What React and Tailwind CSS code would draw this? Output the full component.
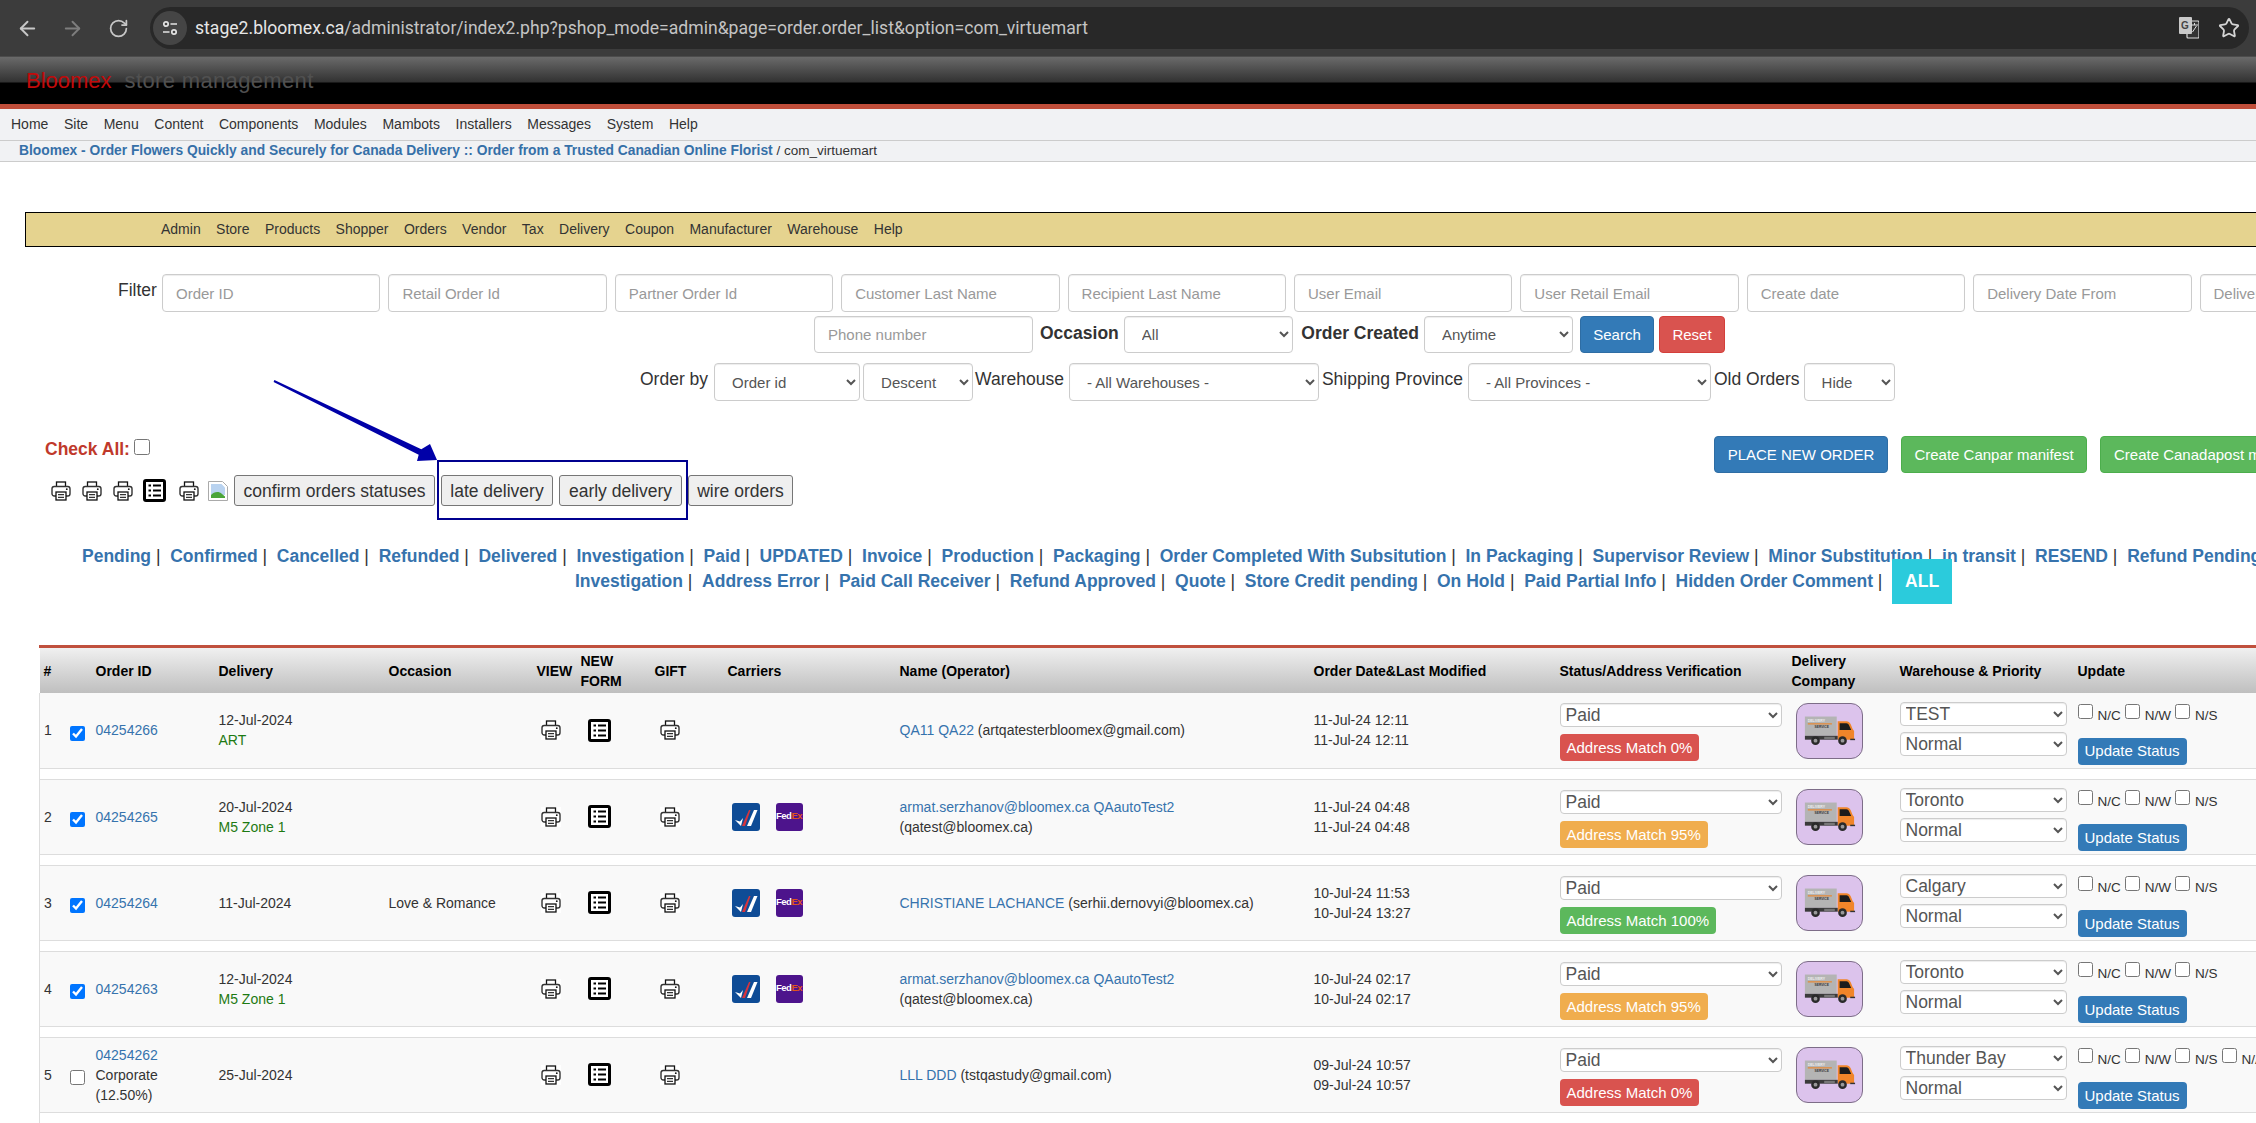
import React from 'react';
import { ArrowLeft, ArrowRight, RotateCw, Star } from 'lucide-react';

const topMenu = ['Home', 'Site', 'Menu', 'Content', 'Components', 'Modules', 'Mambots', 'Installers', 'Messages', 'System', 'Help'];
const shopMenu = ['Admin', 'Store', 'Products', 'Shopper', 'Orders', 'Vendor', 'Tax', 'Delivery', 'Coupon', 'Manufacturer', 'Warehouse', 'Help'];
const filters = ['Order ID', 'Retail Order Id', 'Partner Order Id', 'Customer Last Name', 'Recipient Last Name', 'User Email', 'User Retail Email', 'Create date', 'Delivery Date From', 'Delivery Date To'];
const statusRow1 = ['Pending', 'Confirmed', 'Cancelled', 'Refunded', 'Delivered', 'Investigation', 'Paid', 'UPDATED', 'Invoice', 'Production', 'Packaging', 'Order Completed With Subsitution', 'In Packaging', 'Supervisor Review', 'Minor Substitution', 'in transit', 'RESEND', 'Refund Pending'];
const statusRow2 = ['Investigation', 'Address Error', 'Paid Call Receiver', 'Refund Approved', 'Quote', 'Store Credit pending', 'On Hold', 'Paid Partial Info', 'Hidden Order Comment'];

const orders = [
  { n: 1, id: '04254266', checked: true, delivery: '12-Jul-2024', zone: 'ART', name: 'QA11 QA22', email: '(artqatesterbloomex@gmail.com)', dates: ['11-Jul-24 12:11', '11-Jul-24 12:11'], match: 0, wh: 'TEST' },
  { n: 2, id: '04254265', checked: true, delivery: '20-Jul-2024', zone: 'M5 Zone 1', carriers: true, name: 'armat.serzhanov@bloomex.ca QAautoTest2', email: '(qatest@bloomex.ca)', wrap: true, dates: ['11-Jul-24 04:48', '11-Jul-24 04:48'], match: 95, wh: 'Toronto' },
  { n: 3, id: '04254264', checked: true, delivery: '11-Jul-2024', occasion: 'Love & Romance', carriers: true, name: 'CHRISTIANE LACHANCE', email: '(serhii.dernovyi@bloomex.ca)', dates: ['10-Jul-24 11:53', '10-Jul-24 13:27'], match: 100, wh: 'Calgary' },
  { n: 4, id: '04254263', checked: true, delivery: '12-Jul-2024', zone: 'M5 Zone 1', carriers: true, name: 'armat.serzhanov@bloomex.ca QAautoTest2', email: '(qatest@bloomex.ca)', wrap: true, dates: ['10-Jul-24 02:17', '10-Jul-24 02:17'], match: 95, wh: 'Toronto' },
  { n: 5, id: '04254262', corporate: true, checked: false, delivery: '25-Jul-2024', name: 'LLL DDD', email: '(tstqastudy@gmail.com)', dates: ['09-Jul-24 10:57', '09-Jul-24 10:57'], match: 0, wh: 'Thunder Bay', extraFlag: true },
];

const PrinterIcon = ({ className = '' }) => (
  <svg viewBox="0 0 20 20" className={`w-[20px] h-[20px] shrink-0 ${className}`}>
    <rect width="20" height="20" fill="#fff" />
    <rect x="5.5" y="1" width="9" height="5" fill="#fff" stroke="#111" strokeWidth="1.3" />
    <rect x="1" y="5.5" width="18" height="9.5" rx="2.2" fill="#fff" stroke="#333" strokeWidth="1.4" />
    <rect x="5" y="11" width="10" height="8" fill="#fff" stroke="#111" strokeWidth="1.3" />
    <path d="M7 13.7h6M7 16.3h6" stroke="#333" strokeWidth="1.2" />
    <circle cx="15.8" cy="8.2" r="0.9" fill="#111" />
  </svg>
);

const ListIcon = ({ className = '' }) => (
  <svg viewBox="0 0 23 23" className={`w-[23px] h-[23px] shrink-0 ${className}`}>
    <rect x="1.5" y="1.5" width="20" height="20" rx="1.5" fill="#fff" stroke="#000" strokeWidth="3" />
    <path d="M5.5 6.5h2.5M5.5 11.5h2.5M5.5 16.5h2.5M10 6.5h8M10 11.5h8M10 16.5h8" stroke="#000" strokeWidth="2.2" />
  </svg>
);

const BrokenImage = () => (
  <svg viewBox="0 0 20 20" className="w-[20px] h-[20px] shrink-0 ml-[9px]">
    <path d="M0.5 0.5h14l5 5v14h-19z" fill="#fff" stroke="#aaa" />
    <path d="M3 3h10.5l3.5 3.5V14H3z" fill="#b9d3f0" />
    <path d="M3 17v-3c3-3.5 8-4 11-1l3 2.5V17z" fill="#4ba53a" />
  </svg>
);

const CanparIcon = () => (
  <svg viewBox="0 0 28 28" className="w-[28px] h-[28px] rounded-[3px] shrink-0">
    <rect width="28" height="28" fill="#0f4c96" />
    <path d="M3 17l5 1.500 3-3.500-2 8z" fill="#fff" />
    <path d="M10 23L17 7h1.500L13 23z" fill="#d8343c" />
    <path d="M15 23L22 7h3.500L19 23z" fill="#fff" />
  </svg>
);

const FedexIcon = () => (
  <div className="w-[27px] h-[28px] rounded-[3px] bg-[#4d148c] flex items-center justify-center shrink-0 font-bold text-[9.500px] tracking-[-0.5px] pb-[1px]">
    <span className="text-white">Fed</span>
    <span className="text-[#e2531b]">Ex</span>
  </div>
);

const TruckIcon = () => (
  <div className="w-[67px] h-[56px] rounded-[12px] bg-[#dcc3ec] border border-[#7d6d88] shrink-0 mt-[1px]">
    <svg viewBox="0 0 67 56" className="w-full h-full">
      <rect x="8" y="13" width="33" height="20" fill="#b4b4b4" />
      <text x="11" y="19" fontSize="3.6" fontWeight="700" fill="#eee">DELIVERY</text>
      <rect x="11" y="20" width="25" height="1.2" fill="#e8862e" />
      <text x="18" y="25" fontSize="3.4" fontWeight="700" fill="#333">SERVICE</text>
      <path d="M42 33V18h9c2 0 3.5 1 4.5 3l2 5 1.500 2v9H42z" fill="#f0852a" />
      <path d="M44 20h7c1.500 0 2.500 1 3 2.500L56 27H44z" fill="#1c1c1c" />
      <rect x="8" y="33" width="34" height="4" fill="#3a3a3a" />
      <rect x="28" y="34" width="11" height="2.500" fill="#777" />
      <circle cx="19" cy="38" r="4.500" fill="#2a2a2a" />
      <circle cx="19" cy="38" r="2" fill="#999" />
      <circle cx="47" cy="38" r="4.500" fill="#2a2a2a" />
      <circle cx="47" cy="38" r="2" fill="#999" />
      <rect x="55" y="36" width="5" height="1.500" fill="#333" />
    </svg>
  </div>
);

const TextInput = ({ placeholder, className = '' }) => (
  <input
    placeholder={placeholder}
    className={`h-[38px] px-[13px] bg-white border border-[#ccc] rounded-[4px] text-[15px] text-[#555] placeholder:text-[#999] shadow-[inset_0_1px_1px_rgba(0,0,0,0.075)] shrink-0 ${className}`}
  />
);

const FormSelect = ({ value, className = '' }) => (
  <select
    defaultValue={value}
    className={`h-[38px] pl-[13px] pr-[2px] bg-white border border-[#ccc] rounded-[4px] text-[15px] text-[#555] shadow-[inset_0_1px_1px_rgba(0,0,0,0.075)] shrink-0 ${className}`}
  >
    <option>{value}</option>
  </select>
);

const RowSelect = ({ value, className = '' }) => (
  <select
    defaultValue={value}
    className={`block h-[24px] pl-[1px] bg-white border border-[#ccc] rounded-[4px] text-[17.5px] leading-[20px] text-[#555] shadow-[inset_0_1px_1px_rgba(0,0,0,0.075)] ${className}`}
  >
    <option>{value}</option>
  </select>
);

const Flag = ({ label }) => (
  <>
    <input type="checkbox" className="w-[15px] h-[15px] shrink-0" />
    <span className="text-[13.5px] leading-[15px] ml-[5px] mr-[4px] pt-[4px] text-[#333]">{label}</span>
  </>
);

const matchColor = (m) => (m === 100 ? 'bg-[#5cb85c]' : m === 95 ? 'bg-[#f0ad4e]' : 'bg-[#d9534f]');

const OrderRow = ({ o }) => (
  <>
    <tr className="bg-[#f9f9f9] h-[75px]">
      <td className="border-b border-l border-[#ddd] pl-[4px] align-middle">{o.n}</td>
      <td className="border-b border-[#ddd] pl-[4px] align-middle">
        <input type="checkbox" defaultChecked={o.checked} className="block w-[15px] h-[15px] mt-[6px]" />
      </td>
      <td className="border-b border-[#ddd] pl-[4px] align-middle">
        <a className="text-[#3673ad]">{o.id}</a>
        {o.corporate && <div>Corporate</div>}
        {o.corporate && <div>(12.50%)</div>}
      </td>
      <td className="border-b border-[#ddd] pl-[4px] align-middle">
        <div>{o.delivery}</div>
        {o.zone && <div className="text-[#1d7a12]">{o.zone}</div>}
      </td>
      <td className="border-b border-[#ddd] pl-[4px] align-middle">{o.occasion}</td>
      <td className="border-b border-[#ddd] pl-[8px] align-middle"><PrinterIcon /></td>
      <td className="border-b border-[#ddd] pl-[11px] align-middle"><ListIcon /></td>
      <td className="border-b border-[#ddd] pl-[9px] align-middle"><PrinterIcon /></td>
      <td className="border-b border-[#ddd] pl-[8px] align-middle">
        {o.carriers && (
          <div className="flex items-center gap-[16px]">
            <CanparIcon />
            <FedexIcon />
          </div>
        )}
      </td>
      <td className="border-b border-[#ddd] pl-[4px] align-middle">
        <a className="text-[#3673ad]">{o.name}</a> {o.wrap && <br />}{o.email}
      </td>
      <td className="border-b border-[#ddd] pl-[4px] align-middle">
        <div>{o.dates[0]}</div>
        <div>{o.dates[1]}</div>
      </td>
      <td className="border-b border-[#ddd] pl-[4px] pt-[4px] align-middle">
        <RowSelect value="Paid" className="w-[222px]" />
        <div className={`inline-block mt-[7px] h-[27px] px-[7px] rounded-[4px] text-white text-[15px] leading-[27px] ${matchColor(o.match)}`}>
          Address Match {o.match}%
        </div>
      </td>
      <td className="border-b border-[#ddd] pl-[8px] align-middle"><TruckIcon /></td>
      <td className="border-b border-[#ddd] pl-[4px] pb-[3px] align-middle">
        <RowSelect value={o.wh} className="w-[167px]" />
        <RowSelect value="Normal" className="w-[167px] mt-[6px]" />
      </td>
      <td className="border-b border-[#ddd] pl-[4px] pt-[8px] align-middle">
        <div className="flex items-start">
          <Flag label="N/C" />
          <Flag label="N/W" />
          <Flag label="N/S" />
          {o.extraFlag && <Flag label="N/A" />}
        </div>
        <button className="mt-[15px] h-[27px] w-[109px] bg-[#337ab7] rounded-[4px] text-white text-[15px] block">Update Status</button>
      </td>
    </tr>
    <tr className="h-[11px]">
      <td colSpan={15} className="border-b border-l border-[#ddd]"></td>
    </tr>
  </>
);

const StatusLink = ({ label }) => (
  <>
    <a className="font-bold text-[#3673ad]">{label}</a>
    <span className="font-normal text-[#333]"> |&nbsp; </span>
  </>
);

const App = () => {
  return (
    <div className="w-[2256px] h-[1123px] overflow-hidden bg-white font-['Liberation_Sans',Arial,sans-serif] text-[14px] leading-[20px] text-[#333]">
      <div className="relative w-[2540px]">

        {/* browser toolbar */}
        <div className="w-[2256px] h-[57px] bg-[#3c3c3c] border-b border-[#4c4c4c] flex items-center pl-[16px] pr-[7px] text-[#c7c7c7]">
          <ArrowLeft size={23} strokeWidth={2} />
          <ArrowRight size={23} strokeWidth={2} className="ml-[22px] text-[#7d7d7d]" />
          <RotateCw size={21} strokeWidth={2} className="ml-[24px]" />
          <div className="ml-[21px] flex-1 h-[42px] bg-[#282828] rounded-full flex items-center pl-[3px] pr-[9px]">
            <div className="w-[34px] h-[34px] rounded-full bg-[#454545] flex items-center justify-center">
              <svg viewBox="0 0 18 18" className="w-[18px] h-[18px]" fill="none" stroke="#e3e3e3" strokeWidth="1.700">
                <circle cx="5" cy="5" r="2.200" />
                <path d="M9.500 5H16M2 13h6.500" />
                <circle cx="13" cy="13" r="2.200" />
              </svg>
            </div>
            <div className="ml-[8px] font-['Roboto',sans-serif] text-[17.600px] text-[#c4c4c4] whitespace-nowrap">
              <span className="text-[#e6e6e6]">stage2.bloomex.ca</span>/administrator/index2.php?pshop_mode=admin&amp;page=order.order_list&amp;option=com_virtuemart
            </div>
            <div className="ml-auto flex items-center gap-[19px]">
              <svg viewBox="0 0 20 22" className="w-[20px] h-[22px]">
                <rect x="8" y="4" width="12" height="17" rx="1" fill="#333" stroke="#ddd" strokeWidth="1.200" />
                <rect x="0" y="0" width="13" height="17" rx="1" fill="#c9c9c9" />
                <text x="2" y="12" fontSize="10" fontWeight="700" fill="#444">G</text>
                <path d="M12 8h7M15.500 6v2M13.500 15l4-6" stroke="#ddd" strokeWidth="1" />
              </svg>
              <Star size={22} strokeWidth={2} className="text-[#d5d5d5]" />
            </div>
          </div>
        </div>

        {/* admin header */}
        <div className="w-[2256px] h-[47px] bg-[linear-gradient(#6a6a6a_0,#323232_25px,#000_26px,#000_100%)] pl-[26px] pt-[11px] text-[22px] leading-[26px] whitespace-nowrap">
          <span className="text-[#c00a0a]">Bloomex</span>
          <span className="text-[#505050] ml-[13px] tracking-[0.35px]">store management</span>
        </div>
        <div className="w-[2256px] h-[5px] bg-[#c04e3a]"></div>

        {/* joomla menu */}
        <div className="w-[2256px] h-[32px] bg-[#f1f2f4] border-b border-[#ccc] flex items-center pl-[11px] pb-[2px] gap-[15.600px]">
          {topMenu.map((m) => <a key={m}>{m}</a>)}
        </div>
        <div className="w-[2256px] h-[21px] bg-[#f1f2f4] border-b border-[#ccc] pl-[19px] leading-[19px] whitespace-nowrap text-[13.500px]">
          <a className="font-bold text-[13.800px] text-[#3670a8]">Bloomex - Order Flowers Quickly and Securely for Canada Delivery :: Order from a Trusted Canadian Online Florist</a> / com_virtuemart
        </div>

        {/* virtuemart menu */}
        <div className="ml-[25px] mt-[50px] h-[35px] bg-[#e5d38f] border-y border-l border-black flex items-center pl-[135px] pb-[2px] gap-[15.400px] w-[2500px]">
          {shopMenu.map((m, i) => <a key={`${m}${i}`}>{m}</a>)}
        </div>

        {/* filters */}
        <div className="mt-[27px] text-[17.500px] leading-[24px]">
          <div className="flex items-start pl-[118px]">
            <label className="mt-[4px] w-[44px]">Filter</label>
            <div className="flex gap-[8px]">
              {filters.map((f) => <TextInput key={f} placeholder={f} className="w-[218.400px]" />)}
            </div>
          </div>
          <div className="flex items-center pl-[814px] mt-[4px]">
            <TextInput placeholder="Phone number" className="w-[219px] h-[37px]!" />
            <b className="ml-[7px] pb-[3px]">Occasion</b>
            <FormSelect value="All" className="ml-[5px] w-[169.500px] h-[37px]!" />
            <b className="ml-[8px] pb-[3px]">Order Created</b>
            <FormSelect value="Anytime" className="ml-[5px] w-[149px] h-[37px]!" />
            <button className="ml-[7px] w-[74px] h-[37px] bg-[#337ab7] border border-[#2e6da4] rounded-[4px] text-white text-[15px]">Search</button>
            <button className="ml-[5px] w-[66px] h-[37px] bg-[#d9534f] border border-[#d43f3a] rounded-[4px] text-white text-[15px]">Reset</button>
          </div>
          <div className="flex items-center pl-[640px] mt-[10px]">
            <span className="pb-[6px]">Order by</span>
            <FormSelect value="Order id" className="ml-[6px] w-[146px]" />
            <FormSelect value="Descent" className="ml-[3px] w-[110px]" />
            <span className="ml-[2px] pb-[6px]">Warehouse</span>
            <FormSelect value="- All Warehouses -" className="ml-[5px] w-[250px]" />
            <span className="ml-[3px] pb-[6px]">Shipping Province</span>
            <FormSelect value="- All Provinces -" className="ml-[5px] w-[243px]" />
            <span className="ml-[3px] pb-[6px]">Old Orders</span>
            <FormSelect value="Hide" className="ml-[4px] w-[91px]" />
          </div>
        </div>

        {/* toolbar */}
        <div className="relative flex items-start mt-[35px] pl-[45px] text-[17.500px]">
          <div className="w-[1669px] shrink-0">
            <div className="flex items-start h-[39px] pt-[2px]">
              <b className="text-[#c0392b] leading-[20px] mt-[1px]">Check All:</b>
              <input type="checkbox" className="ml-[4px] mt-[1px] w-[16px] h-[16px]" />
            </div>
            <div className="flex items-center">
              <PrinterIcon className="ml-[6px]" />
              <PrinterIcon className="ml-[11px]" />
              <PrinterIcon className="ml-[11px]" />
              <ListIcon className="ml-[10px]" />
              <PrinterIcon className="ml-[13px]" />
              <BrokenImage />
              <div className="flex ml-[6px] gap-[6px]">
                <button className="h-[31px] w-[201px] bg-[#efefef] border border-[#767676] rounded-[3px]">confirm orders statuses</button>
                <button className="h-[31px] w-[112px] bg-[#efefef] border border-[#767676] rounded-[3px]">late delivery</button>
                <button className="h-[31px] w-[123px] bg-[#efefef] border border-[#767676] rounded-[3px]">early delivery</button>
                <button className="h-[31px] w-[105px] bg-[#efefef] border border-[#767676] rounded-[3px]">wire orders</button>
              </div>
            </div>
          </div>
          <div className="flex gap-[13px] text-[15px] text-white whitespace-nowrap">
            <button className="h-[37px] w-[174px] bg-[#337ab7] border border-[#2e6da4] rounded-[4px]">PLACE NEW ORDER</button>
            <button className="h-[37px] w-[186px] bg-[#5cb85c] border border-[#4cae4c] rounded-[4px]">Create Canpar manifest</button>
            <button className="h-[37px] px-[13px] bg-[#5cb85c] border border-[#4cae4c] rounded-[4px]">Create Canadapost manifest</button>
          </div>

          {/* annotation over the buttons */}
          <div className="absolute left-[437px] top-[24px] w-[251px] h-[60px] border-2 border-[#00008f]"></div>
          <svg className="absolute left-0 top-[-56px] overflow-visible w-[10px] h-[10px]" viewBox="0 0 10 10">
            <polygon
              transform="translate(0 -380)"
              points="273.600,381.900 418.700,454.700 417,461 437,460 430,444 421.300,449.300 274.400,380.100"
              fill="#0000a8"
            />
          </svg>
        </div>

        {/* status links */}
        <div className="mt-[38px] text-[17.500px] leading-[25px] whitespace-nowrap">
          <div className="pl-[82px]">
            {statusRow1.map((s) => <StatusLink key={s} label={s} />)}
          </div>
          <div className="pl-[575px]">
            {statusRow2.map((s) => <StatusLink key={s} label={s} />)}
            <a className="inline-block -my-[10px] h-[45px] leading-[45px] px-[13px] bg-[#2bcbdc] text-white font-bold">ALL</a>
          </div>
        </div>

        {/* orders table */}
        <div className="ml-[39px] mt-[51px] w-[2401px] border-t-[3px] border-[#c0503d]">
          <table className="table-fixed w-[2401px]">
            <colgroup>
              <col className="w-[26px]" /><col className="w-[26px]" /><col className="w-[123px]" /><col className="w-[170px]" />
              <col className="w-[148px]" /><col className="w-[44px]" /><col className="w-[74px]" /><col className="w-[73px]" />
              <col className="w-[172px]" /><col className="w-[414px]" /><col className="w-[246px]" /><col className="w-[232px]" />
              <col className="w-[108px]" /><col className="w-[178px]" /><col className="w-[367px]" />
            </colgroup>
            <thead>
              <tr className="h-[45px] bg-linear-to-b from-[#f0f0f0] to-[#bfbfbf] text-left font-bold text-black">
                <th className="pl-[4px]">#</th>
                <th></th>
                <th className="pl-[4px]">Order ID</th>
                <th className="pl-[4px]">Delivery</th>
                <th className="pl-[4px]">Occasion</th>
                <th className="pl-[4px]">VIEW</th>
                <th className="pl-[4px]">NEW<br />FORM</th>
                <th className="pl-[4px]">GIFT</th>
                <th className="pl-[4px]">Carriers</th>
                <th className="pl-[4px]">Name (Operator)</th>
                <th className="pl-[4px]">Order Date&amp;Last Modified</th>
                <th className="pl-[4px]">Status/Address Verification</th>
                <th className="pl-[4px]">Delivery<br />Company</th>
                <th className="pl-[4px]">Warehouse &amp; Priority</th>
                <th className="pl-[4px]">Update</th>
              </tr>
            </thead>
            <tbody>
              {orders.map((o) => <OrderRow key={o.n} o={o} />)}
            </tbody>
          </table>
        </div>
      </div>
    </div>
  );
};

export default App;
